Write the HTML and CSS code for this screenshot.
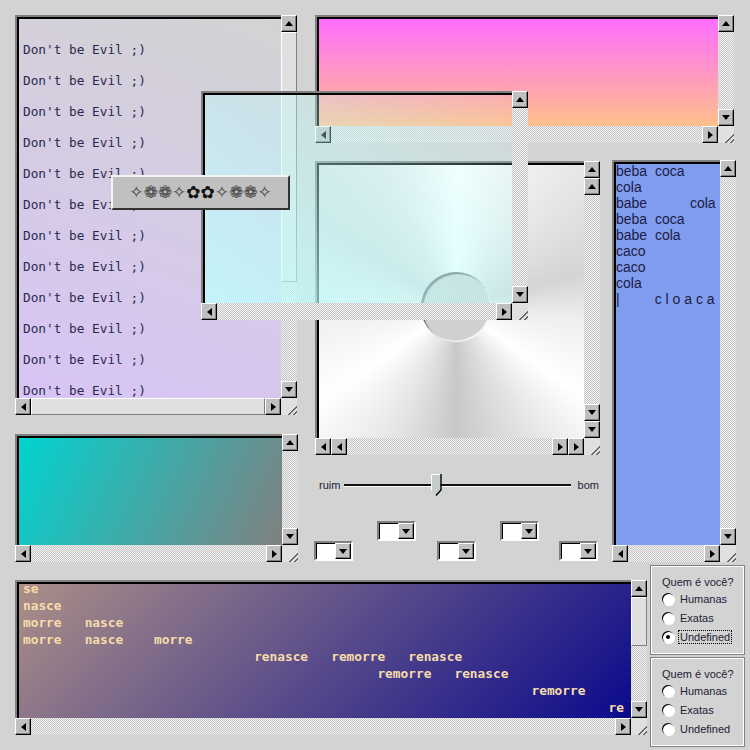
FILE: index.html
```html
<!DOCTYPE html>
<html lang="en">
  <head>
    <meta charset="UTF-8" />
    <meta name="viewport" content="width=device-width, initial-scale=1.0" />
    <title>dont be evil</title>

    <link rel="stylesheet" href="styles.css">
  </head>
  <body>
    <!-- text window -->
    <div class="pane pane-evil">
      <div class="view view-evil">
<pre class="evil-text">
Don't be Evil ;)

Don't be Evil ;)

Don't be Evil ;)

Don't be Evil ;)

Don't be Evil ;)

Don't be Evil ;)

Don't be Evil ;)

Don't be Evil ;)

Don't be Evil ;)

Don't be Evil ;)

Don't be Evil ;)

Don't be Evil ;)</pre>
      </div>
      <div class="vbar">
        <div class="sb up"></div>
        <div class="thumb thumb-evil"></div>
        <div class="track"></div>
        <div class="sb down"></div>
      </div>
      <div class="hbar">
        <div class="sb left"></div>
        <div class="thumb"></div>
        <div class="sb right"></div>
      </div>
      <div class="grip"></div>
    </div>

    <!-- pink window -->
    <div class="pane pane-pink">
      <div class="view view-pink"></div>
      <div class="vbar">
        <div class="sb up"></div>
        <div class="track"></div>
        <div class="sb down"></div>
      </div>
      <div class="hbar">
        <div class="sb left"></div>
        <div class="track"></div>
        <div class="sb right"></div>
      </div>
      <div class="grip"></div>
    </div>

    <!-- metal window -->
    <div class="pane pane-metal">
      <div class="view view-metal">
        <div class="metal-hub"></div>
      </div>
      <div class="vbar">
        <div class="sb up"></div>
        <div class="sb up"></div>
        <div class="track"></div>
        <div class="sb down"></div>
        <div class="sb down"></div>
      </div>
      <div class="hbar">
        <div class="sb left"></div>
        <div class="sb left"></div>
        <div class="track"></div>
        <div class="sb right"></div>
        <div class="sb right"></div>
      </div>
      <div class="grip"></div>
    </div>

    <!-- blue poem -->
    <div class="pane pane-blue">
      <div class="view view-blue">
<pre class="blue-text">beba  coca
cola
babe           cola
beba  coca
babe  cola
caco
caco
cola
|         c l o a c a</pre>
      </div>
      <div class="vbar">
        <div class="sb up"></div>
        <div class="track"></div>
        <div class="sb down"></div>
      </div>
      <div class="hbar">
        <div class="sb left"></div>
        <div class="track"></div>
        <div class="sb right"></div>
      </div>
      <div class="grip"></div>
    </div>

    <!-- teal window -->
    <div class="pane pane-teal">
      <div class="view view-teal"></div>
      <div class="vbar">
        <div class="sb up"></div>
        <div class="track"></div>
        <div class="sb down"></div>
      </div>
      <div class="hbar">
        <div class="sb left"></div>
        <div class="track"></div>
        <div class="sb right"></div>
      </div>
      <div class="grip"></div>
    </div>

    <!-- slider + combos -->
    <div class="controls">
      <div class="slider">
        <span class="slider__label">ruim</span>
        <div class="slider__groove">
          <svg class="slider__thumb" width="11" height="22" viewBox="0 0 11 22">
            <path d="M0.5 0.5H9.5V15.5L5 21L0.5 16.5Z" fill="#c4cccc" />
            <path d="M0.5 16.5V0.5H9.5" fill="none" stroke="#fff" />
            <path d="M10 0V16L5 21.5" fill="none" stroke="#000" stroke-width="1.4" />
          </svg>
        </div>
        <span class="slider__label">bom</span>
      </div>
      <div class="combos combos--top">
        <div class="combo"><div class="sb down"></div></div>
        <div class="combo"><div class="sb down"></div></div>
      </div>
      <div class="combos combos--bottom">
        <div class="combo"><div class="sb down"></div></div>
        <div class="combo"><div class="sb down"></div></div>
        <div class="combo"><div class="sb down"></div></div>
      </div>
    </div>

    <!-- purple window -->
    <div class="pane pane-purple">
      <div class="view view-purple">
<pre class="purple-text">se
nasce
morre   nasce
morre   nasce    morre
                              renasce   remorre   renasce
                                              remorre   renasce
                                                                  remorre
                                                                            re</pre>
      </div>
      <div class="vbar">
        <div class="sb up"></div>
        <div class="thumb thumb-purple"></div>
        <div class="track"></div>
        <div class="sb down"></div>
      </div>
      <div class="hbar">
        <div class="sb left"></div>
        <div class="track"></div>
        <div class="sb right"></div>
      </div>
      <div class="grip"></div>
    </div>

    <!-- radio groups -->
    <div class="groups">
      <div class="group">
        <div class="group__title">Quem é você?</div>
        <div class="radio"><span class="radio__dot"></span><span>Humanas</span></div>
        <div class="radio"><span class="radio__dot"></span><span>Exatas</span></div>
        <div class="radio"><span class="radio__dot radio__dot--on"></span><span class="radio__focus">Undefined</span></div>
      </div>
      <div class="group">
        <div class="group__title">Quem é você?</div>
        <div class="radio"><span class="radio__dot"></span><span>Humanas</span></div>
        <div class="radio"><span class="radio__dot"></span><span>Exatas</span></div>
        <div class="radio"><span class="radio__dot"></span><span>Undefined</span></div>
      </div>
    </div>

    <!-- floating glass window, sits over the others -->
    <div class="pane pane-glass">
      <div class="view view-glass"></div>
      <div class="vbar">
        <div class="sb up"></div>
        <div class="track"></div>
        <div class="sb down"></div>
      </div>
      <div class="hbar">
        <div class="sb left"></div>
        <div class="track"></div>
        <div class="sb right"></div>
      </div>
      <div class="grip"></div>
    </div>

    <div class="flowers"><span class="f-star">✧</span><span class="f-gray">❁❁</span><span class="f-star">✧</span><span class="f-dark">✿✿</span><span class="f-star">✧</span><span class="f-gray">❁❁</span><span class="f-star">✧</span></div>
  </body>
</html>
```

FILE: styles.css
```css
* {
  margin: 0;
  padding: 0;
  box-sizing: border-box;
}

body {
  width: 750px;
  height: 750px;
  overflow: hidden;
  background: #d3d3d3;
  font-family: "Liberation Sans", Arial, sans-serif;
  color: #223;
}

pre {
  font-family: inherit;
}

/* windows */
.pane {
  position: absolute;
  display: grid;
  grid-template-columns: 1fr 16px;
  grid-template-rows: 1fr 17px;
}

.pane-evil {
  left: 15px;
  top: 15px;
  width: 282px;
  height: 400px;
}

.pane-pink {
  left: 315px;
  top: 15px;
  width: 419px;
  height: 128px;
}

.pane-metal {
  left: 315px;
  top: 161px;
  width: 285px;
  height: 294px;
}

.pane-blue {
  left: 612px;
  top: 160px;
  width: 124px;
  height: 402px;
}

.pane-teal {
  left: 15px;
  top: 434px;
  width: 283px;
  height: 128px;
}

.pane-purple {
  left: 15px;
  top: 580px;
  width: 632px;
  height: 155px;
}

.pane-glass {
  left: 201px;
  top: 91px;
  width: 327px;
  height: 229px;
}

.view {
  position: relative;
  overflow: hidden;
  min-height: 0;
  border: solid #808080;
  border-width: 2px 0 0 2px;
  box-shadow: inset 2px 2px #000;
}

.view-evil {
  background: linear-gradient(20deg, #d8c4f6, #d3d3d3);
}

.view-pink {
  background: linear-gradient(#ff6cff, #ffc08c);
}

.view-metal {
  background: conic-gradient(from 0deg at 139px 144px, #fff, #e8e8e8 40deg, #d4d4d4 75deg, #eee 95deg, #fff 125deg, #e4e4e4 150deg, #c8c8c8 180deg, #e4e4e4 205deg, #fff 235deg, #f0f0f0 265deg, #d8d8d8 300deg, #e6e6e6 330deg, #fff);
}

.view-blue {
  background: #809df0;
}

.view-teal {
  background: linear-gradient(115deg, #00d4d0, #808080);
}

.view-purple {
  background: linear-gradient(135deg, #ac9088, #0a0a8c);
}

.view-glass {
  background: linear-gradient(to top right, rgba(190, 255, 255, 0.8), rgba(190, 255, 255, 0.05));
}

.metal-hub {
  position: absolute;
  left: 104px;
  top: 109px;
  width: 70px;
  height: 70px;
  border-radius: 50%;
  background: #d0d0d0;
  box-shadow: inset 2px 2px 1px rgba(60, 60, 60, 0.75), inset -1px -1px 1px #fff;
}

/* pane text */
.evil-text {
  padding: 25px 0 0 6px;
  font: 12.75px/15.5px "DejaVu Sans Mono", monospace;
  color: #2a2a50;
}

.blue-text {
  padding: 1px 0 0 2px;
  font-size: 14px;
  line-height: 16px;
  color: #1c1c44;
}

.purple-text {
  margin-top: -2px;
  padding: 0 0 0 6px;
  font: bold 12.8px/17px "DejaVu Sans Mono", monospace;
  color: #f6dcaa;
}

/* scrollbars */
.vbar,
.hbar {
  display: flex;
  min-width: 0;
  min-height: 0;
}

.vbar {
  flex-direction: column;
}

.track {
  flex: 1;
  background: repeating-conic-gradient(#c4c4c4 0 25%, #f2f2f2 0 50%) 0 0 / 2px 2px;
}

.thumb {
  flex: 1;
  background: #e0e0e0;
  border-top: 1px solid #fff;
  border-left: 1px solid #fff;
  border-right: 1px solid #808080;
  border-bottom: 1px solid #808080;
}

.thumb-evil {
  flex: none;
  height: 250px;
}

.thumb-purple {
  flex: none;
  height: 49px;
}

.sb {
  flex: none;
  width: 16px;
  height: 17px;
  display: flex;
  align-items: center;
  justify-content: center;
  background: #c0c0c0;
  border-top: 1px solid #fff;
  border-left: 1px solid #fff;
  border-right: 1px solid #000;
  border-bottom: 1px solid #000;
  box-shadow: inset -1px -1px #808080;
}

.sb::after {
  content: "";
  width: 0;
  height: 0;
  border: 4.5px solid transparent;
}

.sb.up::after {
  border-top-width: 0;
  border-bottom: 5px solid #000;
}

.sb.down::after {
  border-bottom-width: 0;
  border-top: 5px solid #000;
}

.sb.left::after {
  border-left-width: 0;
  border-right: 5px solid #000;
}

.sb.right::after {
  border-right-width: 0;
  border-left: 5px solid #000;
}

.grip {
  background: linear-gradient(135deg, #e0e0e0 72%, #666 72% 78%, #e0e0e0 78% 86%, #666 86% 92%, #e0e0e0 92%);
}

/* slider and combos */
.controls {
  position: absolute;
  left: 314px;
  top: 473px;
  width: 285px;
}

.slider {
  display: flex;
  align-items: center;
  gap: 4px;
  height: 24px;
  padding-left: 5px;
}

.slider__label {
  font-size: 11px;
}

.slider__groove {
  position: relative;
  flex: 1;
  height: 3px;
  margin-right: 3px;
  background: #111;
  border-bottom: 1px solid #fff;
}

.slider__thumb {
  position: absolute;
  left: 87px;
  top: -10px;
}

.combos {
  display: flex;
  justify-content: space-between;
}

.combos--top {
  margin-top: 24px;
  padding: 0 60px 0 63px;
}

.combos--bottom {
  padding-right: 1px;
}

.combo {
  display: flex;
  justify-content: flex-end;
  width: 39px;
  height: 20px;
  background: #fff;
  border: 2px solid;
  border-color: #808080 #fff #fff #808080;
  box-shadow: inset 1px 1px #000;
}

.combo .sb {
  height: 16px;
}

/* radio groups */
.groups {
  position: absolute;
  left: 650px;
  top: 565px;
  display: flex;
  flex-direction: column;
  gap: 2px;
}

.group {
  width: 95px;
  height: 90px;
  padding: 9px 0 0 11px;
  border: 1px solid #808080;
  outline: 1px solid #fff;
  outline-offset: -2px;
  font-size: 11px;
}

.group__title {
  line-height: 14px;
}

.radio {
  display: flex;
  align-items: center;
  gap: 6px;
  height: 19px;
}

.radio__dot {
  position: relative;
  flex: none;
  width: 12px;
  height: 12px;
  border-radius: 50%;
  background: #fff;
  box-shadow: inset 1px 1px 0 #000, 1px 1px 0 #fff;
}

.radio__dot--on::after {
  content: "";
  position: absolute;
  left: 4px;
  top: 4px;
  width: 4px;
  height: 4px;
  border-radius: 50%;
  background: #000;
}

.radio__focus {
  outline: 1px dotted #000;
  padding: 0 1px;
  margin-left: -1px;
}

/* floating toolbar */
.flowers {
  position: absolute;
  left: 111px;
  top: 175px;
  width: 179px;
  height: 35px;
  display: flex;
  align-items: center;
  justify-content: center;
  background: #c0c0c0;
  border: 2px solid;
  border-color: #f4f4f4 #333 #333 #f4f4f4;
  font: 17px/1 "DejaVu Sans", sans-serif;
}

.f-star {
  color: #444;
}

.f-gray {
  color: #444;
}

.f-dark {
  color: #111;
}
```
